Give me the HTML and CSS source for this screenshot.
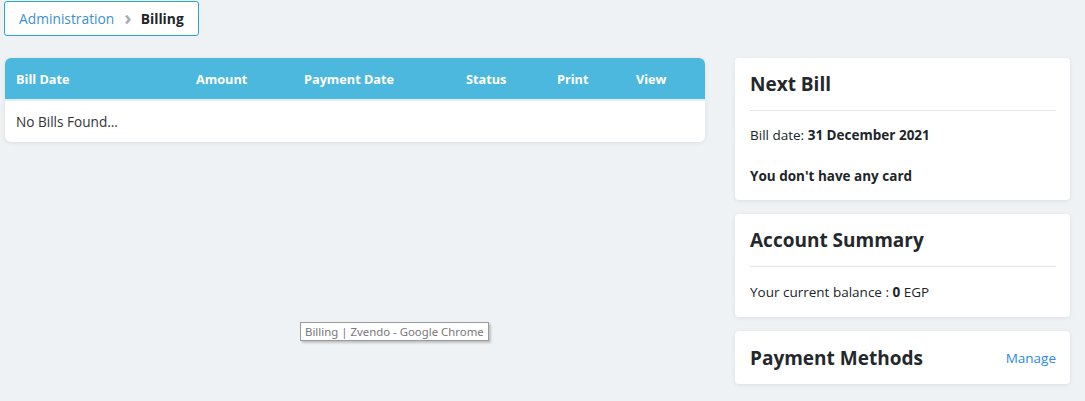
FILE: index.html
```html
<html>
<head>
<title>Billing | Zvendo</title>
<link rel="stylesheet" href="styles.css">
</head>
<body>
<div class="crumbs">
    <a href="#" class="crumb-link">Administration</a>
    <span class="crumb-sep">&#8250;</span>
    <span class="crumb-current">Billing</span>
</div>
<div class="page">
    <div class="main">
        <div class="bills">
            <table class="bills-table">
                <thead>
                    <tr>
                        <th class="c-date">Bill Date</th>
                        <th class="c-amount">Amount</th>
                        <th class="c-paid">Payment Date</th>
                        <th class="c-status">Status</th>
                        <th class="c-print">Print</th>
                        <th class="c-view">View</th>
                    </tr>
                </thead>
                <tbody>
                    <tr><td colspan="6">No Bills Found...</td></tr>
                </tbody>
            </table>
        </div>
    </div>
    <div class="side">
        <div class="card">
            <h3 class="card-title">Next Bill</h3>
            <div class="card-body next">
                <p>Bill date: <b>31 December 2021</b></p>
                <p class="gap"><b>You don't have any card</b></p>
            </div>
        </div>
        <div class="card">
            <h3 class="card-title">Account Summary</h3>
            <div class="card-body summary">
                <p>Your current balance : <b>0</b> EGP</p>
            </div>
        </div>
        <div class="card card-row">
            <h3 class="card-title plain">Payment Methods</h3>
            <a href="#" class="manage">Manage</a>
        </div>
    </div>
</div>
<div class="tip">Billing | Zvendo - Google Chrome</div>
</body>
</html>
```

FILE: styles.css
```css
body {
    margin: 0;
    background: #eff2f4;
    font-family: "Open Sans", "Noto Sans", sans-serif;
    font-size: 13.5px;
    color: #212529;
}
.crumbs {
    display: flex;
    width: fit-content;
    align-items: center;
    margin: 1px 0 0 4px;
    height: 33px;
    padding: 0 14px;
    background: #fff;
    border: 1px solid #2ea4d1;
    border-radius: 3px;
    font-size: 13.8px;
}
.crumb-link {
    color: #3d8fcf;
    text-decoration: none;
}
.crumb-sep {
    color: #a9adb1;
    font-size: 20px;
    font-weight: bold;
    margin: -3px 9px 0 10px;
}
.crumb-current {
    font-weight: bold;
    color: #212529;
}
.page {
    display: flex;
    gap: 30px;
    padding: 22px 15px 0 5px;
}
.main {
    width: 700px;
}
.bills {
    background: #fff;
    border-radius: 6px;
    overflow: hidden;
    box-shadow: 0 1px 4px rgba(0, 0, 0, 0.08);
}
.bills-table {
    width: 100%;
    border-collapse: collapse;
    table-layout: fixed;
}
.bills-table th {
    height: 40px;
    box-sizing: border-box;
    padding: 0 0 0 11px;
    background: #4cb8de;
    color: #fff;
    text-align: left;
    font-size: 12.7px;
    font-weight: bold;
    border-bottom: 2px solid #dff1f8;
}
.bills-table thead tr {
    height: 42px;
}
.c-date { width: 180px; }
.c-amount { width: 108px; }
.c-paid { width: 162px; }
.c-status { width: 91px; }
.c-print { width: 79px; }
.bills-table td {
    height: 42px;
    padding: 0 0 0 11px;
    font-size: 13.6px;
    color: #333;
}
.side {
    width: 335px;
    display: flex;
    flex-direction: column;
    gap: 14px;
}
.card {
    background: #fff;
    border-radius: 4px;
    padding: 0 14px 0 15px;
    box-shadow: 0 1px 4px rgba(0, 0, 0, 0.08);
}
.card-title {
    margin: 0;
    padding: 13px 0 13px;
    font-size: 19px;
    font-weight: bold;
    color: #24272b;
    border-bottom: 1px solid #e1e3e5;
}
.card-title.plain {
    border-bottom: none;
    padding: 14px 0 13px;
}
.card-body {
    padding: 14px 0 15px;
}
.card-body.next {
    padding-bottom: 14px;
}
.card-body.summary {
    padding: 15px 0 15px;
}
.card-body p {
    margin: 0;
    line-height: 20px;
}
.card-body .gap {
    margin-top: 21px;
}
.card-row {
    display: flex;
    justify-content: space-between;
    align-items: center;
}
.manage {
    color: #2a89e6;
    text-decoration: none;
    font-size: 13.5px;
}
.tip {
    position: absolute;
    left: 300px;
    top: 322px;
    padding: 1px 4px;
    background: #fff;
    border: 1px solid #9a9a9a;
    box-shadow: 2px 2px 2px rgba(0, 0, 0, 0.2);
    color: #777;
    font-family: "Noto Sans", sans-serif;
    font-size: 11.4px;
}
```
